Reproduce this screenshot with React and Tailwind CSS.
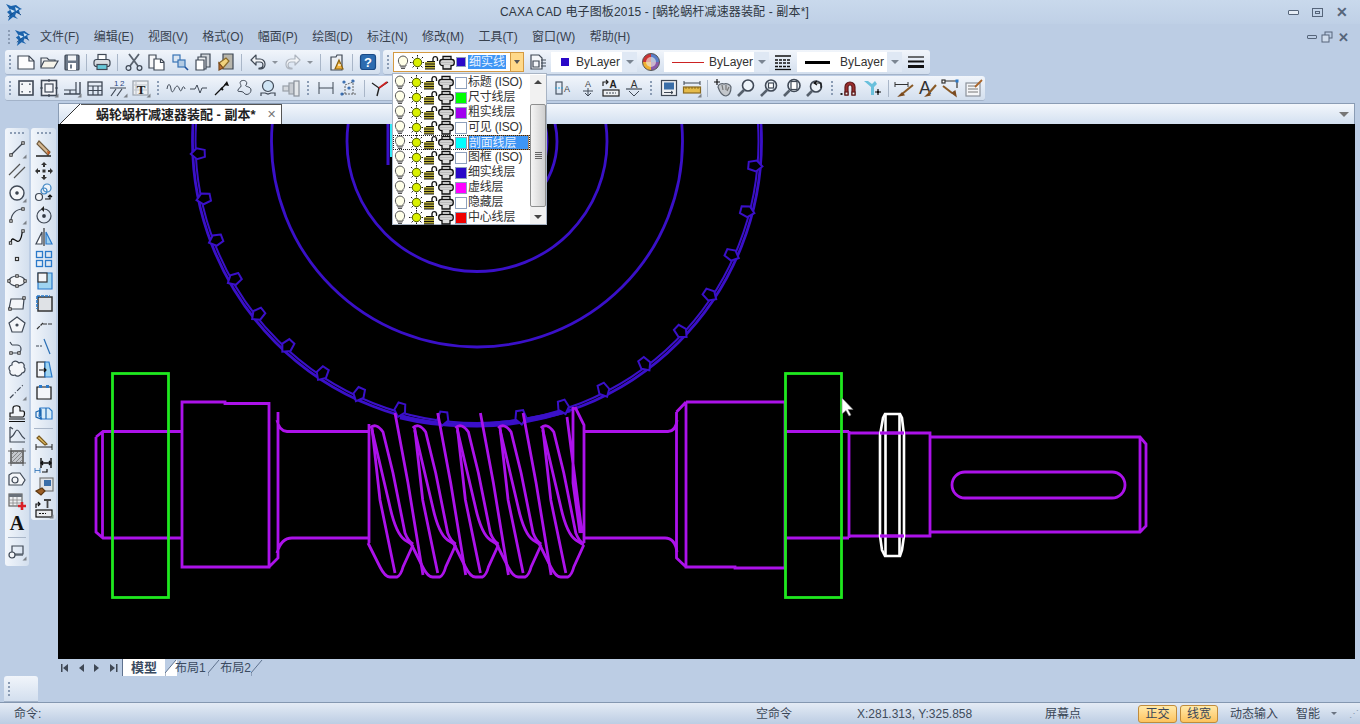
import React from 'react';

const Ico = ({ children, w = 20, h = 20, vb = '0 0 20 20' }) => (
  <svg width={w} height={h} viewBox={vb} fill="none" stroke="#3f4855" strokeWidth="1.2" className="shrink-0">
    {children}
  </svg>
);
const Fly = () => <path d="M19.5 15.5v4h-4z" fill="#7c8188" stroke="none" />;
const Node = ({ x, y }) => <rect x={x - 1.2} y={y - 1.2} width="2.4" height="2.4" fill="#fff" stroke="#222" strokeWidth="0.9" />;

const icons = {
  // standard toolbar
  new: <><path d="M2 4h11l5 5v8H2z" fill="#fdfdfe" /><path d="M13 4v5h5" /></>,
  open: <><path d="M2 15V6h6l2 2h6v2" fill="#eef0f2" /><path d="M2 15l3-6h14l-4 7H2z" fill="#f6f4ea" /></>,
  save: <><rect x="3" y="3" width="14" height="15" rx="1" fill="#6c7888" /><rect x="6" y="3.5" width="8" height="5" fill="#f2f4f6" stroke="none" /><rect x="6" y="11" width="8" height="7" fill="#fff" stroke="none" /><rect x="8" y="12.5" width="2" height="4" fill="#6c7888" stroke="none" /></>,
  print: <><rect x="6" y="2.5" width="8" height="6" fill="#fff" /><rect x="2" y="7.5" width="16" height="7" rx="2.5" fill="#d9dde2" /><rect x="5" y="12.5" width="10" height="5" fill="#67c7d8" /></>,
  cut: <><path d="M5 2l9 12M15 2L6 14" strokeWidth="1.8" stroke="#59626e" /><circle cx="4.5" cy="16" r="2.4" /><circle cx="15.5" cy="16" r="2.4" /></>,
  copy: <><path d="M2 3h7v13H2z" fill="#f6f7f9" /><path d="M7 7h7l3 3v8H7z" fill="#fff" /><path d="M13.5 7v3.5H17" /></>,
  clone: <><rect x="3" y="3" width="7" height="7" fill="#dbe6f2" stroke="#3873b5" /><rect x="8" y="8" width="7" height="7" fill="#b3cbe4" stroke="#3873b5" /><path d="M15 15l3 3" stroke="#1d4f9c" strokeWidth="1.6" /></>,
  paste: <><path d="M8 2h9v13H8z" fill="#d2d6db" /><path d="M5 5h8v12H5z" fill="#eceef0" /><path d="M3 8h8v10H3z" fill="#fff" /></>,
  brush: <><path d="M7 2h10v15H7z" fill="#b8b6ac" /><path d="M3 11l7-5 3 3-6 7z" fill="#f1d27c" stroke="#8a6a2a" /><path d="M3 11l4 5-4 2z" fill="#c0702f" stroke="#7a4a1f" /></>,
  undo: <path d="M8 3L3 8l5 5v-3h4a3 3 0 0 1 3 3 3 3 0 0 1-3 3h-1v1h2a5 5 0 0 0 4-5 5 5 0 0 0-5-5H8z" fill="#f2f4f7" strokeLinejoin="round" />,
  redo: <path d="M12 3l5 5-5 5v-3H8a3 3 0 0 0-3 3 3 3 0 0 0 3 3h1v1H7a5 5 0 0 1-4-5 5 5 0 0 1 5-5h4z" fill="#f2f4f7" stroke="#aeb5bf" strokeLinejoin="round" />,
  props: <><path d="M4 5h5l1-2h5v15H4z" fill="#eceff3" /><path d="M12 8l4 9H8z" fill="#f3b53f" stroke="#8c6414" /><path d="M11 13h3" stroke="#fff" /></>,
  help: <><rect x="2.5" y="2.5" width="15" height="15" rx="2.5" fill="#2d6cb0" stroke="#1a4a86" /><text x="10" y="15" textAnchor="middle" fontSize="13" fontWeight="700" fill="#fff" stroke="none" fontFamily="Liberation Sans">?</text></>,
  // second toolbar
  frame: <><rect x="3" y="3" width="14" height="14" strokeWidth="1.6" fill="#f4f6f9" /><path d="M6 7V6h1M13 6h1v1M14 13v1h-1M7 14H6v-1" /></>,
  frame2: <><rect x="2.5" y="2.5" width="15" height="15" strokeWidth="1.6" fill="#f4f6f9" /><rect x="6" y="6" width="8" height="8" /><path d="M1 10h3M16 10h3M10 1v3M10 16v3" /><Fly /></>,
  title: <><path d="M2 16h16V4" strokeWidth="1.4" /><path d="M2 12h12V4M8 12v4M14 12v4" /><Fly /></>,
  table: <><rect x="3" y="4" width="14" height="13" strokeWidth="1.3" /><path d="M3 8h14M8 8v9M13 8v9M3 12.5h14" /></>,
  num: <><text x="6" y="8" fontSize="8" fill="#284a86" stroke="none" fontFamily="Liberation Sans">1</text><text x="12" y="8" fontSize="8" fill="#284a86" stroke="none" fontFamily="Liberation Sans">2</text><path d="M2 10h16M3 18l5-7M9 18l5-7" /><Fly /></>,
  txt: <><rect x="2" y="3" width="15" height="14" fill="#eef0f3" stroke="#9aa2ac" /><path d="M5 3v14M2 7h15M2 12h15" stroke="#c0c5cc" /><text x="10" y="15.5" textAnchor="middle" fontSize="13" fontWeight="700" fill="#222" stroke="none" fontFamily="Liberation Serif">T</text><Fly /></>,
  wave: <path d="M1 11c1-6 3-6 4 0s3 1 4-1 3-3 4 0 2 4 3 1 2-3 3 0" strokeWidth="1" />,
  kink: <path d="M1 11h5l2-4 3 8 2-5h5" strokeWidth="1" />,
  needle: <><path d="M3 17L15 5" stroke="#111" /><path d="M15 3l2 5-5-1z" fill="#111" stroke="none" /><path d="M9 10l2 2" stroke="#111" strokeWidth="2" /></>,
  spline: <><path d="M6 3c5-2 7 2 5 4s5 1 5 5-5 6-7 3-7 0-6-3 3-2 3-4-2-3 0-5z" strokeWidth="1" /></>,
  lens: <><circle cx="10" cy="8" r="5.5" fill="#cfe4f4" /><path d="M3 18v-3h4l3 1 3-1h4v3" /></>,
  cyl: <><rect x="2" y="8" width="6" height="5" fill="#d5d9de" stroke="#99a0a8" /><rect x="8" y="5" width="5" height="11" fill="#c8ccd2" stroke="#99a0a8" /><rect x="13" y="3" width="5" height="15" fill="#e4e7ea" stroke="#8a919a" /></>,
  dimh: <path d="M3 4v12M17 4v12M3 10h14" strokeWidth="1" />,
  dimp: <><path d="M3 16h14M6 16V7M14 16V4M6 7l8-3" strokeDasharray="2 1" stroke="#555" strokeWidth="0.9" /><circle cx="5" cy="4" r="1" stroke="#2a61a8" /><circle cx="14" cy="3" r="1" stroke="#2a61a8" /><circle cx="3" cy="16" r="1" stroke="#2a61a8" /><circle cx="10" cy="10" r="1" stroke="#2a61a8" /></>,
  trim: <><path d="M2 5l7 5 9-6" stroke="#222" /><path d="M9 10l-2 8" stroke="#222" strokeWidth="1.4" /><path d="M9 10l8-6" stroke="#cf2222" strokeWidth="1.6" /></>,
  xka: <><rect x="1" y="4" width="6" height="12" stroke="#4a5665" /><path d="M0 10h9" stroke="#2da0d6" strokeDasharray="2 1" /><text x="9" y="14" fontSize="9" fill="#444" stroke="none" fontFamily="Liberation Sans">A</text></>,
  aup: <><text x="10" y="9" textAnchor="middle" fontSize="9" fill="#444" stroke="none" fontFamily="Liberation Sans">A</text><path d="M5 13h10M10 10v8M7 15l3 3 3-3" strokeWidth="1" /></>,
  aabc: <><text x="12" y="9.5" textAnchor="middle" fontSize="10" fontWeight="700" fill="#222" stroke="none" fontFamily="Liberation Sans">A</text><path d="M2 8V4h5M5 2l2 2-2 2" stroke="#222" /><rect x="2" y="12" width="16" height="6" fill="#eef0f2" stroke="#222" /><path d="M5 15h10" strokeDasharray="2 1" /></>,
  aflip: <><text x="10" y="9.5" textAnchor="middle" fontSize="10" fill="#333" stroke="none" fontFamily="Liberation Sans">A</text><path d="M2 11h16" /><path d="M5 13l5 5 5-5" strokeWidth="1" /></>,
  layer: <><rect x="2.5" y="2.5" width="15" height="15" fill="#eef0f3" /><rect x="5" y="4.5" width="10" height="7" fill="#3a6ea8" stroke="none" /><path d="M5 14.5h9M12 13l2 1.5-2 1.5" strokeWidth="1" /></>,
  ruler: <><path d="M2 3v4M18 3v4M2 5h16" strokeWidth="1" /><rect x="1.5" y="9" width="17" height="6" fill="#e5bb4a" stroke="#8a6a20" /><path d="M4 9v2M7 9v2M10 9v2M13 9v2M16 9v2" stroke="#7a5a10" strokeWidth="0.8" /><Fly /></>,
  pan: <><path d="M1 4h6M4 1v6" stroke="#111" /><path d="M5 9c0-3 4-4 6-3 2-1 6 0 7 3 0 3-1 8-5 9-3 0-6-3-8-9z" fill="#c3c7cc" stroke="#5b636d" /><path d="M9 7l1 5M13 7v5M16 9l-2 4" stroke="#777" /></>,
  zoom: <><circle cx="12" cy="7.5" r="5.5" fill="#eef4fa" strokeWidth="1.6" /><path d="M8 12l-6 6" strokeWidth="2.6" stroke="#56606c" /></>,
  zoomw: <><circle cx="12" cy="7.5" r="5.5" fill="#eef4fa" strokeWidth="1.6" /><rect x="9.5" y="5" width="5" height="5" fill="#fff" /><path d="M8 12l-6 6" strokeWidth="2.6" stroke="#56606c" /></>,
  zoomf: <><circle cx="12" cy="7.5" r="6" fill="#eef4fa" strokeWidth="1.6" /><rect x="9" y="3.5" width="6" height="8" fill="#fff" /><path d="M7.5 12.5L2 18" strokeWidth="2.6" stroke="#56606c" /></>,
  zoomb: <><circle cx="11" cy="8.5" r="5.5" fill="#eef4fa" strokeWidth="1.6" /><path d="M7 13l-5 5" strokeWidth="2.6" stroke="#56606c" /><path d="M10 5h6v5M12 3l-3 2 3 2" stroke="#111" /></>,
  magnet: <><path d="M5 17V9a5 5 0 0 1 10 0v8h-3V9a2 2 0 0 0-4 0v8z" fill="#9c2e2e" stroke="#5e1a1a" /><rect x="5" y="14" width="3" height="3" fill="#eee" stroke="#5e1a1a" /><rect x="12" y="14" width="3" height="3" fill="#eee" stroke="#5e1a1a" /><rect x="0.5" y="15" width="2" height="2" fill="#222" stroke="none" /></>,
  ysnap: <><path d="M1 3l7 6v8h3V9l3-3-2-3-3 3-4-3z" fill="#69c0dc" stroke="none" /><path d="M15 11v6M12 14h6" stroke="#111" /><circle cx="15" cy="14" r="1.2" fill="#111" stroke="none" /></>,
  bdim: <><path d="M1 4v5M14 4v5M1 6.5h13" strokeWidth="1" stroke="#333" /><path d="M19 7L8 16" stroke="#8a5a26" strokeWidth="2" /><path d="M8 15l-3 3 5-1z" fill="#7a4a1f" stroke="#7a4a1f" /></>,
  bA: <><text x="8" y="16" textAnchor="middle" fontSize="18" fill="#333" stroke="none" fontFamily="Liberation Sans">A</text><path d="M19 7l-7 8" stroke="#8a5a26" strokeWidth="2" /><path d="M12 15l-3 3 4-1z" fill="#7a4a1f" stroke="#7a4a1f" /></>,
  bcorner: <><path d="M4 3h13v7" stroke="#333" /><rect x="2" y="2" width="3" height="3" fill="#fff" stroke="#333" /><rect x="15.5" y="1.5" width="3" height="3" fill="#2a79c9" stroke="none" /><path d="M3 8l9 7" stroke="#8a5a26" strokeWidth="2" /><path d="M12 15l4 3-1-5z" fill="#7a4a1f" stroke="#7a4a1f" /></>,
  bnote: <><rect x="3" y="5" width="14" height="13" fill="#f5f6f8" stroke="#8b929b" /><path d="M5 8h8M5 11h10M5 14h10" stroke="#777" strokeWidth="1" /><path d="M19 2l-7 7" stroke="#a9642a" strokeWidth="1.8" /></>,
  // left toolbars
  line: <><path d="M4 16L16 4" /><Node x={4} y={16} /><Node x={16} y={4} /><Fly /></>,
  parallel: <path d="M2 14L13 3M7 17L18 6" stroke="#555" />,
  circle: <><circle cx="10" cy="10" r="7" strokeWidth="1.4" fill="#f4f6f9" /><circle cx="10" cy="10" r="1.2" fill="#333" /><Fly /></>,
  arc: <><path d="M4 16C4 9 9 4 16 4" /><Node x={4} y={16} /><Node x={16} y={4} /><Fly /></>,
  bez: <><path d="M4 15c1-8 6 3 9-2s1-7 3-9" stroke="#111" strokeWidth="1.3" /><Node x={3.5} y={16} /><Node x={16} y={4} /></>,
  point: <rect x="8.5" y="8.5" width="3" height="3" fill="#fff" stroke="#333" />,
  ellipse: <><ellipse cx="10" cy="10" rx="8" ry="5" fill="#f4f6f9" /><Node x={10} y={5} /><Node x={2} y={10} /><Node x={18} y={10} /><Node x={10} y={15} /></>,
  rect: <><path d="M4 6h13l-1 10H2z" fill="#f4f6f9" /><Node x={17} y={5} /><Node x={3} y={16} /></>,
  penta: <><path d="M10 2l8 6-3 9H5L2 8z" fill="#f4f6f9" /><circle cx="10" cy="10" r="1" fill="#333" /></>,
  hook: <><path d="M4 16h6a4 4 0 0 0 0-8H5M5 8L3 5" /><Node x={4} y={16} /><Node x={12} y={16} /></>,
  cloud: <path d="M6 3c3-2 5 0 6 1 3-2 6 1 5 4 2 2 1 6-2 6-1 3-5 4-7 2-3 1-6-1-5-4-2-2-1-6 2-6 0-1 0-3 1-3z" fill="#f4f6f9" />,
  cline: <><path d="M3 17L17 3" strokeDasharray="5 2 1 2" /><Fly /></>,
  hand: <><path d="M3 14V10h3V5c0-3 7-3 7 0v3h3c2 0 2 5 0 6z" fill="#f4f6f9" stroke="#111" /><path d="M2 16h16M2 18.5h16" stroke="#111" /></>,
  curve: <><path d="M3 2v15h15" /><path d="M6 4l-3-2M3 13c5-2 5-8 7-8 3 0 3 6 8 9" /></>,
  hatch: <><rect x="4" y="4" width="12" height="12" fill="#c4c7cc" stroke="#555" /><path d="M1 4h18M1 16h18M4 1v18M16 1v18" stroke="#555" strokeWidth="0.9" /><path d="M4 8l4-4M4 12l8-8M4 16l12-12M8 16l8-8M12 16l4-4" stroke="#777" strokeWidth="0.8" /></>,
  shape: <><path d="M2 6l3-2h8l5 7-3 5H2z" fill="#f4f6f9" /><circle cx="8" cy="11" r="3" /></>,
  tbl: <><rect x="2" y="3" width="13" height="12" fill="#eef0f3" stroke="#666" /><rect x="2" y="3" width="13" height="3" fill="#6a717a" stroke="none" /><path d="M2 9h13M2 12h13M6 6v9M10 6v9" stroke="#888" strokeWidth="0.8" /><path d="M15 11v8M11 15h8" stroke="#d81f26" strokeWidth="2.6" /></>,
  bigA: <text x="10" y="17" textAnchor="middle" fontSize="20" fontWeight="700" fill="#111" stroke="none" fontFamily="Liberation Serif">A</text>,
  block: <><path d="M5 5h11v8H5z" /><circle cx="5" cy="14" r="3" fill="#f4f6f9" /><path d="M8 14h8" /><Fly /></>,
  eraser: <><path d="M5 2l11 11-2 3L3 5z" fill="#d6b892" stroke="#6f5a3c" /><path d="M13 12l3 1-2 3z" fill="#c4541d" stroke="none" /><path d="M2 17h15" stroke="#111" strokeWidth="1.4" /></>,
  move: <g fill="#333" stroke="none"><path d="M10 1l3 3h-2v2H9V4H7zM10 19l3-3h-2v-2H9v2H7zM1 10l3 3v-2h2V9H4V7zM19 10l-3 3v-2h-2V9h2V7z" /><rect x="8.5" y="8.5" width="3" height="3" /></g>,
  rotcopy: <><circle cx="13" cy="5" r="4" stroke="#3f86c4" fill="#eef4fa" /><circle cx="10" cy="8" r="3" stroke="#3f86c4" /><circle cx="5" cy="14" r="3.5" fill="#f4f6f9" /><path d="M11 16h5v-3M14 14l2-2 2 2" stroke="#111" /></>,
  rotate: <><circle cx="10" cy="11" r="7" /><circle cx="10" cy="11" r="1.3" fill="#222" /><path d="M10 1l-3 3 3 3z" fill="#222" stroke="none" /></>,
  mirror: <><path d="M10 1v18" stroke="#333" /><path d="M8 5v12H2z" fill="#fff" /><path d="M12 5v12h6z" fill="#9fd0ef" stroke="#2a79c9" /></>,
  array: <g stroke="#2a79c9" strokeWidth="1.3"><rect x="2.5" y="2.5" width="6" height="6" /><rect x="11.5" y="2.5" width="6" height="6" /><rect x="2.5" y="11.5" width="6" height="6" /><rect x="11.5" y="11.5" width="6" height="6" /></g>,
  scale: <><path d="M4 2h14v16H4z" fill="#9fd4f0" stroke="#2a79c9" /><rect x="4" y="2" width="9" height="9" fill="#f4f6f9" stroke="#333" /></>,
  fillet: <><rect x="4" y="4" width="14" height="14" fill="#dfe2e6" stroke="#333" strokeWidth="1.5" /><path d="M3 3h13M3 3v13" stroke="#2a79c9" strokeWidth="1.6" strokeDasharray="3 1" /></>,
  trimd: <path d="M3 14L9 8M9 9h9" stroke="#333" strokeDasharray="4 1" />,
  breakl: <><path d="M2 9h6" strokeDasharray="3 1" /><path d="M10 2l6 15" stroke="#2a6fb5" /></>,
  stretch: <><path d="M3 3h8v15H3z" fill="#f4f6f9" stroke="#111" /><path d="M11 3h4l3 15h-7z" fill="#9fd4f0" stroke="#2a79c9" /><path d="M5 11h7M10 9l2 2-2 2" stroke="#111" /></>,
  chop: <><path d="M3 6h14v12H3z" fill="#f4f6f9" stroke="#111" /><rect x="5" y="4" width="3" height="3" fill="#2a79c9" stroke="none" /><rect x="12" y="4" width="3" height="3" fill="#2a79c9" stroke="none" /></>,
  box3: <><path d="M6 5h9l3 3v8H8l-3-3z" stroke="#2a79c9" fill="#d8ecf8" /><path d="M6 5v8M2 9l5-2v9l-5-2zM12 5v11" stroke="#1d68b0" /></>,
  pencildim: <><path d="M2 11v6M18 11v6M2 14h16" strokeWidth="1" stroke="#222" /><path d="M5 3l8 8-2 1-8-7z" fill="#e8c468" stroke="#7a5a20" /></>,
  dimfit: <><path d="M7 3v10M17 3v10" stroke="#111" strokeWidth="1.4" /><path d="M7 8h10M9 6L7 8l2 2M15 6l2 2-2 2" stroke="#111" strokeWidth="1.4" /><path d="M1 13v5M6 13v5M1 15.5h5" strokeWidth="0.8" stroke="#2a6fb5" /><path d="M8 17h5v-3" stroke="#111" /></>,
  paint: <><rect x="6" y="1" width="13" height="13" fill="#dfe3e8" stroke="#777" /><rect x="10" y="3" width="7" height="6" fill="#3a6ea8" stroke="none" /><path d="M2 14l6-3 3 3-4 4z" fill="#9c5d24" stroke="#5e3810" /></>,
  texted: <><path d="M2 9V5h4M4 3l2 2-2 2" stroke="#111" /><path d="M10 1h7M13.5 1v8" stroke="#444" strokeWidth="1.8" /><rect x="2" y="11" width="16" height="7" fill="#e9ebee" stroke="#111" /><path d="M5 14.5h7" stroke="#111" strokeDasharray="2 1" /><Fly /></>,
};

const Dots = ({ w = 9 }) => (
  <div className="flex flex-col items-center justify-center gap-[2px] shrink-0" style={{ width: w }}>
    {[0, 1, 2, 3].map((i) => <span key={i} className="block w-[2px] h-[2px] bg-[#8b9cb4]" />)}
  </div>
);
const Sep = ({ w = 9 }) => (
  <div className="flex justify-center shrink-0" style={{ width: w }}>
    <span className="block w-px h-[17px] bg-[#a9b6c8]" />
  </div>
);
const Tool = ({ n }) => <div className="w-[23px] h-[22px] flex items-center justify-center shrink-0"><Ico>{icons[n]}</Ico></div>;
const Small = () => (
  <div className="w-[12px] flex justify-center shrink-0">
    <span className="block w-0 h-0 border-x-[3px] border-x-transparent border-t-[3px] border-t-[#8c939c]" />
  </div>
);
const Bar = ({ items }) =>
  items.map((n, i) => {
    if (n === '|') return <Sep key={i} w={8} />;
    if (n === ':') return <Dots key={i} w={12} />;
    if (n === 'v') return <Small key={i} />;
    return <Tool key={i} n={n} />;
  });

const panel = 'bg-linear-to-b from-[#f1f5fb] to-[#d3dfee] rounded-[3px] border-b border-[#a3b3c9]';

const Bulb = () => (
  <svg width="14" height="15" viewBox="0 0 14 15" fill="none" className="shrink-0">
    <path d="M4 9.5C1.500 7.500 1.500 1.500 7 1c5.500 .5 5.500 6.500 3 8.500V11H4z" fill="#ffffe8" stroke="#555" />
    <path d="M4.500 12h5M5 13.500h4" stroke="#555" />
  </svg>
);
const Sun = () => (
  <svg width="15" height="15" viewBox="0 0 15 15" fill="none" className="shrink-0">
    <path d="M7.500 0v15M0 7.500h15M2 2l11 11M13 2L2 13" stroke="#111" strokeDasharray="1.5 1" />
    <circle cx="7.500" cy="7.500" r="4.200" fill="#d9f000" stroke="#556000" />
  </svg>
);
const Lock = () => (
  <svg width="14" height="15" viewBox="0 0 14 15" fill="none" className="shrink-0">
    <path d="M8 6V3.500a2.300 2.300 0 0 1 4.500 0V6" stroke="#111" strokeWidth="1.300" />
    <path d="M0 7h10v7H0z" fill="#b5aa38" />
    <path d="M2 6.500h8M0 9h10M0 11.500h10M0 14h10" stroke="#111" />
  </svg>
);
const Printer = () => (
  <svg width="16" height="15" viewBox="0 0 16 15" fill="none" className="shrink-0">
    <path d="M4 5V1.500h8V5" fill="#fff" stroke="#111" strokeWidth="1.300" />
    <rect x="0.800" y="4.500" width="14.400" height="6" rx="2.600" fill="#fff" stroke="#111" strokeWidth="1.400" />
    <path d="M2 7.500h12" stroke="#bbb" strokeWidth="2.200" />
    <path d="M4 10v4h8v-4" fill="#ddd" stroke="#111" strokeWidth="1.300" />
  </svg>
);

const layers = [
  ['标题 (ISO)', '#ffffff'],
  ['尺寸线层', '#00ff00'],
  ['粗实线层', '#a000f0'],
  ['可见 (ISO)', '#ffffff'],
  ['剖面线层', '#00ffff'],
  ['图框 (ISO)', '#ffffff'],
  ['细实线层', '#2a08c8'],
  ['虚线层', '#ff00ff'],
  ['隐藏层', '#ffffff'],
  ['中心线层', '#f00000'],
];

function LayerRow({ name, color, selected }) {
  return (
    <div className={`h-[15px] flex items-center ${selected ? 'outline outline-dotted outline-[#222] -outline-offset-1' : ''}`}>
      <Bulb />
      <span className="w-[2px]" />
      <Sun />
      <Lock />
      <Printer />
      <span className="w-[12px] h-[12px] ml-px shrink-0 border border-[#8ea0bc]" style={{ backgroundColor: color }} />
      <span className={`ml-px h-[15px] leading-[15px] w-[61px] text-[12px] tracking-[-0.2px] whitespace-nowrap ${selected ? 'bg-[#3d95f5] text-[#e8f2ff] border border-[#a8805a] leading-[13px]' : 'text-[#333]'}`}>{name}</span>
    </div>
  );
}

function LayerDropdown() {
  return (
    <div className="absolute left-[392px] top-[73px] w-[155px] h-[152px] bg-white border border-[#a8b4c4] flex pt-px z-10">
      <div className="w-[137px] shrink-0">
        {layers.map(([n, c], i) => <LayerRow key={n} name={n} color={c} selected={i === 4} />)}
      </div>
      <div className="flex-1 bg-[#f1f1f1] flex flex-col items-center justify-between py-[5px] relative">
        <span className="block w-0 h-0 border-x-[4px] border-x-transparent border-b-[4px] border-b-[#444]" />
        <div className="absolute left-0 right-0 top-[29px] h-[103px] bg-linear-to-r from-[#f5f5f5] to-[#cfcfcf] border border-[#8e8f8f] rounded-[2px] flex flex-col justify-center items-center gap-px">
          <span className="block w-[7px] h-px bg-[#666]" />
          <span className="block w-[7px] h-px bg-[#666]" />
          <span className="block w-[7px] h-px bg-[#666]" />
          <span className="block w-[7px] h-px bg-[#666]" />
        </div>
        <span className="block w-0 h-0 border-x-[4px] border-x-transparent border-t-[4px] border-t-[#444]" />
      </div>
    </div>
  );
}

const ComboArrow = () => (
  <div className="w-[15px] self-stretch bg-[#dfe8f4] flex items-center justify-center">
    <span className="block w-0 h-0 border-x-[4px] border-x-transparent border-t-[4px] border-t-[#7b8592]" />
  </div>
);

function Combo({ width, children }) {
  return (
    <div className="h-[20px] bg-white flex items-center shrink-0" style={{ width }}>
      <div className="flex-1 flex items-center h-full">{children}</div>
      <ComboArrow />
    </div>
  );
}

const Wheel = () => (
  <svg width="20" height="20" viewBox="0 0 20 20" className="shrink-0">
    <defs>
      <clipPath id="wh"><circle cx="10" cy="10" r="8.500" /></clipPath>
    </defs>
    <g clipPath="url(#wh)">
      <rect width="20" height="20" fill="#f0e8d0" />
      <path d="M10 10L10 0 0 0 0 10z" fill="#c33" />
      <path d="M10 10L10 0 20 0 20 10z" fill="#5a7ec8" />
      <path d="M10 10L20 10 20 20 10 20z" fill="#8a5aa8" />
      <path d="M10 10L0 10 0 20 10 20z" fill="#f0b030" />
      <circle cx="10" cy="10" r="5" fill="#ece8e0" opacity="0.650" />
    </g>
    <circle cx="10" cy="10" r="8.500" fill="none" stroke="#555" />
  </svg>
);

const Logo = ({ size = 18 }) => (
  <svg width={size} height={size} viewBox="0 0 18 18" className="shrink-0">
    <path d="M1 1l5 2 5-1 4 3 2 1-3 1 1 4-4-1-1 3 3 3-5-2-5 4 2-6-3-3 3-2z" fill="#1b63ac" />
    <path d="M5 6l5 2-3 2zM10 4l4 2-3 2z" fill="#cfe5f6" />
    <path d="M3 14l5-4M12 9l4 3" stroke="#144a86" strokeWidth="1" fill="none" />
  </svg>
);

const LINE = '#ac12ea';
const BLUE = '#3a10c8';
const leftTeeth = [7, 16, 25, 33.7, 42.8, 51.7, 60.4, 69.3, 78.2, 87.5];
const rightTeeth = [9, 18, 27, 37, 47, 56.6, 66, 75.5, 85];

const Tooth = ({ angle }) => (
  <path transform={`rotate(${angle} 477 141.500)`} d="M473.500 414L471.500 422L477 428L482.500 422L480.500 414Z" fill="#000" stroke={BLUE} strokeWidth="2" />
);

const Lobe = ({ i, last }) => (
  <g transform={`translate(${i * 42.7} 0)`}>
    <path d="M370 428Q376 422 383 432L393 473L405 533Q408 541 413 544" />
    <path d="M372 430L390 507Q396 534 405 540L413 545" />
    <path d="M372 428L380 500L395 573" />
    <path d="M368 543L380 567Q385 577 390 577H397Q401 575 403 567L413 545" />
    {!last && <path d="M395 413L408 483L423 575" />}
  </g>
);

function Drawing() {
  return (
    <svg className="block w-full h-full" viewBox="58 124 1297 535" fill="none">
      {/* gear */}
      <g stroke={BLUE}>
        <circle cx="477" cy="141.500" r="284.500" strokeWidth="2.800" />
        <circle cx="477" cy="141.500" r="281.500" strokeWidth="2" />
        <circle cx="477" cy="141.500" r="205.500" strokeWidth="2.800" />
        <circle cx="477" cy="141.500" r="130" strokeWidth="2.800" />
        <circle cx="477" cy="141.500" r="80" strokeWidth="2.800" />
        <circle cx="477" cy="141.500" r="70" strokeWidth="2.800" />
        <path d="M388 124V165" strokeWidth="3" />
        <path d="M400 417Q477 436 570 410" strokeWidth="4.500" />
        {leftTeeth.map((a) => <Tooth key={a} angle={a} />)}
        {rightTeeth.map((a) => <Tooth key={a} angle={-a} />)}
      </g>
      <path d="M391 124V157" stroke="#35e8f5" strokeWidth="2" />
      {/* shaft */}
      <g stroke={LINE} strokeWidth="2.800">
        <path d="M96 437L103 431.500H182M96 437V532L103 538H182M102.500 432V538" />
        <path d="M182 567V402H225V403.500H269V567ZM269 567L278 558V412M277 420Q279 431 287 431.500H369M277 553Q281 538 292 538H369" />
        <path d="M369 424V543" />
        <path d="M575 407L584 425V543M567 417L582 533M573 407V483L580 533" />
        <path d="M585 431.500H668Q676 431 677 420M585 538H665Q675 538 677 552" />
        <path d="M676.500 412V558L686 567M676.500 412L686 402M686 402V567H735V568H785V402H686" />
        <path d="M785 431.500H849M785 538H849" />
        <path d="M849 433H930V536H849ZM849 431V538" />
        <path d="M930 437H1140L1146 444V526L1140 532H930M1140 437V532" />
        <rect x="952" y="472" width="173" height="26" rx="13" />
        <Lobe i={0} />
        <Lobe i={1} />
        <Lobe i={2} />
        <Lobe i={3} />
        <Lobe i={4} last />
      </g>
      {/* nuts */}
      <g stroke="#1fe81f" strokeWidth="2.800">
        <rect x="112.500" y="373.500" width="56" height="224" />
        <rect x="785.500" y="373.500" width="56" height="224" />
      </g>
      {/* retaining ring */}
      <g stroke="#fff" strokeWidth="2.600">
        <path d="M880 435L883 418L885 414H900L902 418L904 435V536L902 550L900 556H885L882 550L880 536Z" />
        <path d="M885.500 414V556M899.500 414V556" />
      </g>
      <path d="M880 433H904M880 536H904" stroke={LINE} strokeWidth="2.800" />
      {/* cursor */}
      <path d="M842 398V414L846 410.500L849 416L851 415L848 409.500H853Z" fill="#fff" stroke="#777" strokeWidth="0.600" />
    </svg>
  );
}

const col1 = ['line', 'parallel', 'circle', 'arc', 'bez', 'point', 'ellipse', 'rect', 'penta', 'hook', 'cloud', 'cline', 'hand', 'curve', 'hatch', 'shape', 'tbl', 'bigA'];
const col2a = ['eraser', 'move', 'rotcopy', 'rotate', 'mirror', 'array', 'scale', 'fillet', 'trimd', 'breakl', 'stretch', 'chop', 'box3'];
const col2b = ['pencildim', 'dimfit', 'paint', 'texted'];

const VGrip = () => (
  <div className="h-[10px] flex items-center justify-center gap-[2px]">
    {[0, 1, 2, 3].map((i) => <span key={i} className="block w-[2px] h-[2px] bg-[#8b9cb4]" />)}
  </div>
);

const SideBtn = ({ n }) => <div className="h-[22px] flex items-center justify-center"><Ico>{icons[n]}</Ico></div>;

const sideBar = 'bg-linear-to-r from-[#f2f6fb] to-[#d3dfee] rounded-[3px] flex flex-col';

const menus = ['文件(F)', '编辑(E)', '视图(V)', '格式(O)', '幅面(P)', '绘图(D)', '标注(N)', '修改(M)', '工具(T)', '窗口(W)', '帮助(H)'];

const Nav = ({ d }) => (
  <div className="w-[16.500px] flex justify-center">
    <svg width="10" height="10" viewBox="0 0 10 10" fill="#3f4855">{d}</svg>
  </div>
);

const Slant = ({ fill = 'none' }) => (
  <svg width="12" height="17" viewBox="0 0 12 17" className="shrink-0">
    <path d="M0 17V14L11 1H12V17Z" fill={fill} />
    <path d="M0 17V14L11 1" fill="none" stroke="#5f728e" />
  </svg>
);

export default function App() {
  return (
    <div className="w-[1360px] h-[724px] relative overflow-hidden bg-[#bccde4] flex flex-col text-[12px] text-[#333] [font-family:'Liberation_Sans','Noto_Sans_CJK_SC',sans-serif]">
      {/* title bar */}
      <div className="h-[24px] shrink-0 flex items-center bg-linear-to-b from-[#c9d9ec] to-[#bfd0e6] pl-[5px] pr-[13px]">
        <Logo size={18} />
        <div className="flex-1 text-center text-[#2f3742] ml-[-2px] text-[12px] tracking-[0.15px]">CAXA CAD 电子图板2015 - [蜗轮蜗杆减速器装配 - 副本*]</div>
        <div className="flex items-center gap-[13px]">
          <span className="block w-[11px] h-[5px] border border-[#56657a] rounded-[1px] bg-[#e6edf6]" />
          <span className="w-[11px] h-[9px] border border-[#56657a] flex items-center justify-center"><span className="block w-[5px] h-[3px] border border-[#56657a]" /></span>
          <span className="w-[11px] text-[14px] leading-[14px] text-[#56657a] font-bold">✕</span>
        </div>
      </div>
      {/* menu bar */}
      <div className="h-[26px] shrink-0 flex items-center pl-[8px] pr-[11px]">
        <div className="flex flex-col gap-[2px] w-[6px]">
          {[0, 1, 2, 3].map((i) => <span key={i} className="block w-[2px] h-[2px] bg-[#8b9cb4]" />)}
        </div>
        <Logo size={17} />
        <div className="flex items-center gap-[14.300px] ml-[9px] text-[12px] text-[#38414e]">
          {menus.map((m) => <span key={m} className="whitespace-nowrap">{m}</span>)}
        </div>
        <div className="ml-auto flex items-center gap-[3px] text-[#56657a]">
          <span className="block w-[10px] h-[4px] border border-[#56657a] rounded-[1px] mr-px" />
          <svg width="12" height="12" viewBox="0 0 12 12" fill="none" stroke="#56657a"><rect x="4" y="1" width="7" height="6" /><rect x="1" y="4" width="7" height="7" fill="#d0dcec" /></svg>
          <span className="ml-[2px] text-[13px] leading-[13px] font-bold">✕</span>
        </div>
      </div>
      {/* toolbar row 1 */}
      <div className="h-[25px] shrink-0 flex pl-[5px] gap-[3px]">
        <div className={`${panel} w-[375px] flex items-center`}>
          <Dots />
          <Tool n="new" /><Tool n="open" /><Tool n="save" />
          <Sep w={7} />
          <Tool n="print" />
          <Sep />
          <Tool n="cut" /><Tool n="copy" /><Tool n="clone" /><Tool n="paste" /><Tool n="brush" />
          <Sep />
          <Tool n="undo" /><Small /><Tool n="redo" /><Small />
          <Sep />
          <Tool n="props" />
          <Sep w={8} />
          <Tool n="help" />
        </div>
        <div className={`${panel} w-[547px] flex items-center`}>
          <Dots w={10} />
          <div className="w-[131px] h-[20px] shrink-0 bg-white border border-[#d49a42] flex items-center">
            <div className="flex-1 flex items-center pl-[2px]">
              <Bulb /><Sun /><Lock /><Printer />
              <span className="w-[10px] h-[10px] bg-[#2a08c8] border border-[#8ea0bc] ml-px shrink-0" />
              <span className="ml-[2px] bg-[#3d95f5] text-[#e8f2ff] h-[14px] leading-[14px] px-px whitespace-nowrap">细实线</span>
            </div>
            <div className="w-[13px] self-stretch bg-[#ffd98a] border-l border-[#d49a42] flex items-center justify-center">
              <span className="block w-0 h-0 border-x-[3px] border-x-transparent border-t-[4px] border-t-[#555]" />
            </div>
          </div>
          <div className="w-[27px] flex justify-center shrink-0">
            <Ico>
              <path d="M3 3h8l3 3v11H3z" fill="#f4f6f9" />
              <path d="M5 9h6v6H5z" />
              <path d="M13 8h5M13 11h5M13 14h5" strokeWidth="1" />
            </Ico>
          </div>
          <Combo width={86}>
            <span className="block w-[8px] h-[8px] bg-[#2a08c8] ml-[10px]" />
            <span className="ml-[7px] text-[#333]">ByLayer</span>
          </Combo>
          <div className="w-[27px] flex justify-center shrink-0"><Wheel /></div>
          <Combo width={105}>
            <span className="block w-[32px] h-px bg-[#c22] ml-[8px]" />
            <span className="ml-[5px]">ByLayer</span>
          </Combo>
          <div className="w-[28px] flex justify-center shrink-0">
            <Ico>
              <path d="M2 4h16" stroke="#111" strokeWidth="1.500" />
              <path d="M2 8h16M2 11h16M2 14.500h16" stroke="#111" strokeWidth="1.500" strokeDasharray="3 1" />
              <path d="M2 17.500h16" stroke="#111" strokeWidth="1.300" />
            </Ico>
          </div>
          <Combo width={105}>
            <span className="block w-[25px] h-[3px] bg-black ml-[8px]" />
            <span className="ml-[10px]">ByLayer</span>
          </Combo>
          <div className="w-[27px] flex justify-center shrink-0">
            <Ico>
              <path d="M2 5h16" stroke="#111" strokeWidth="1.200" />
              <path d="M2 9.500h16" stroke="#111" strokeWidth="2" />
              <path d="M2 14.500h16" stroke="#111" strokeWidth="3" />
            </Ico>
          </div>
        </div>
      </div>
      {/* toolbar row 2 */}
      <div className="h-[25px] mt-px shrink-0 pl-[5px]">
        <div className={`${panel} w-[980px] h-full flex items-center`}>
          <Dots />
          <Bar items={['frame', 'frame2', 'title', 'table', 'num', 'txt', ':', 'wave', 'kink', 'needle', 'spline', 'lens', 'cyl', ':', 'dimh', 'dimp', '|', 'trim']} />
          <div className="w-[162px] shrink-0" />
          <Bar items={['xka', 'aup', 'aabc', 'aflip', ':', 'layer', 'ruler', '|', 'pan', 'zoom', 'zoomw', 'zoomf', 'zoomb', ':', 'magnet', 'ysnap', '|', 'bdim', 'bA', 'bcorner', 'bnote']} />
        </div>
      </div>
      {/* work area */}
      <div className="flex-1 min-h-0 mt-[2px] flex">
        <div className="w-[58px] shrink-0 pl-[5px] pt-[25px] flex items-start gap-[2px]">
          <div className={`${sideBar} w-[24px] h-[438px]`}>
            <VGrip />
            {col1.map((n) => <SideBtn key={n} n={n} />)}
            <div className="h-[6px] flex items-center px-[3px]"><span className="block w-full h-px bg-[#a9b6c8]" /></div>
            <SideBtn n="block" />
          </div>
          <div className={`${sideBar} w-[25px] h-[392px]`}>
            <VGrip />
            {col2a.map((n) => <SideBtn key={n} n={n} />)}
            <div className="h-[8px] flex items-center px-[3px]"><span className="block w-full h-px bg-[#a9b6c8]" /></div>
            {col2b.map((n) => <SideBtn key={n} n={n} />)}
          </div>
        </div>
        <div className="w-[1297px] shrink-0 flex flex-col">
          <div className="h-[21px] shrink-0 flex items-stretch bg-linear-to-b from-[#f3f7fc] to-[#d3e0f0] border-t border-x border-[#8a9cb4]">
            <svg width="21" height="20" viewBox="0 0 21 20" className="shrink-0 ml-px">
              <path d="M0 20L20 0H21V20Z" fill="#fff" />
              <path d="M0 20L20 0" stroke="#333" fill="none" />
            </svg>
            <div className="w-[201px] bg-white border-r border-[#555] border-t flex items-center">
              <span className="ml-[15px] text-[13px] font-bold text-[#222] whitespace-nowrap">蜗轮蜗杆减速器装配 - 副本*</span>
              <span className="ml-auto mr-[5px] text-[#777] text-[11px] leading-none">✕</span>
            </div>
            <div className="ml-auto mr-[5px] flex items-center">
              <span className="block w-0 h-0 border-x-[5px] border-x-transparent border-t-[5px] border-t-[#777]" />
            </div>
          </div>
          <div className="h-[535px] shrink-0 bg-black"><Drawing /></div>
          <div className="h-[17px] shrink-0 flex items-center text-[12px] text-[#3a4a60]">
            <div className="flex items-center w-[66px] ml-[-2px]">
              <Nav d={<path d="M2 1h1.500v8H2zM9 1v8L4 5z" />} />
              <Nav d={<path d="M8 1v8L3 5z" />} />
              <Nav d={<path d="M2 1v8l5-4z" />} />
              <Nav d={<path d="M1 1v8l5-4zM7 1h1.500v8H7z" />} />
            </div>
            <div className="h-full w-[43px] bg-white border-l border-[#5f728e] flex items-center justify-center font-bold text-[13px] whitespace-nowrap">模型</div>
            <Slant fill="#ffffff" />
            <span className="ml-[-2px] w-[30px] text-center whitespace-nowrap">布局1</span>
            <span className="w-[3px]" />
            <Slant />
            <span className="w-[31px] text-center whitespace-nowrap">布局2</span>
            <Slant />
          </div>
        </div>
      </div>
      {/* docked command toolbar */}
      <div className="h-[26px] shrink-0 pl-[4px]">
        <div className="w-[34px] h-full bg-linear-to-b from-[#f1f5fb] to-[#d3dfee] rounded-t-[3px] flex flex-col justify-center gap-[2px] pl-[4px] border-b border-[#a3b3c9]">
          {[0, 1, 2, 3].map((i) => <span key={i} className="block w-[2px] h-[2px] bg-[#8b9cb4]" />)}
        </div>
      </div>
      {/* status bar */}
      <div className="h-[22px] shrink-0 border-t border-[#8497b0] bg-linear-to-b from-[#e4ebf5] to-[#bccde3] flex items-center text-[12px] text-[#3a4656]">
        <span className="ml-[14px] w-[742px]">命令:</span>
        <span className="w-[101px]">空命令</span>
        <span className="w-[188px] text-[#404c5c]">X:281.313, Y:325.858</span>
        <span className="w-[93px]">屏幕点</span>
        <span className="w-[39px] h-[18px] rounded-[3px] bg-linear-to-b from-[#ffe9a8] to-[#fdc35c] border border-[#c08b3c] flex items-center justify-center">正交</span>
        <span className="ml-[3px] w-[38px] h-[18px] rounded-[3px] bg-linear-to-b from-[#ffe9a8] to-[#fdc35c] border border-[#c08b3c] flex items-center justify-center">线宽</span>
        <span className="ml-[12px] w-[66px] whitespace-nowrap">动态输入</span>
        <span className="w-[32px]">智能</span>
        <span className="ml-[3px] block w-0 h-0 border-x-[3px] border-x-transparent border-t-[3px] border-t-[#6a7482]" />
        <span className="ml-[12px] text-[#8b9cb4] text-[10px] leading-none tracking-[1px]">⋰</span>
      </div>
      <LayerDropdown />
    </div>
  );
}
